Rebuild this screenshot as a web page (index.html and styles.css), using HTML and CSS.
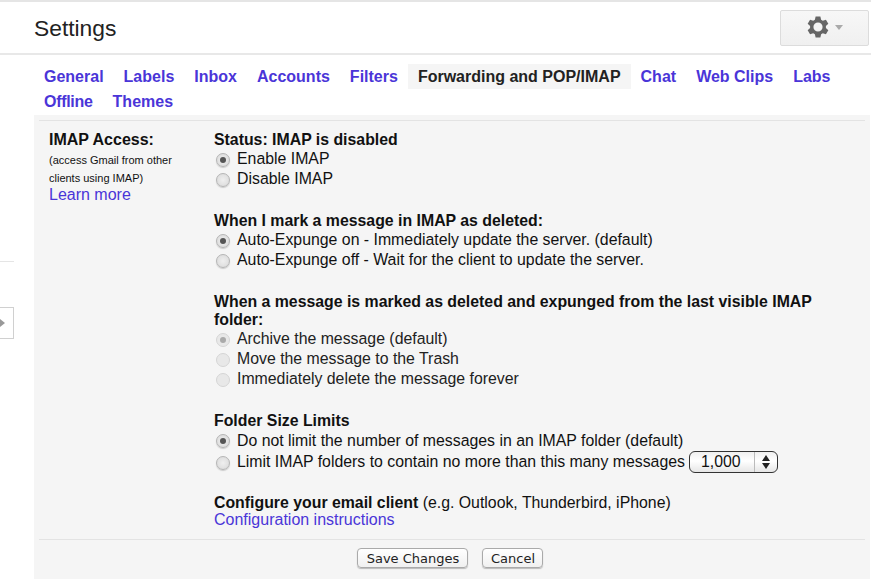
FILE: index.html
```html
<!DOCTYPE html>
<html lang="en">
<head>
    <meta charset="UTF-8">
    <title>Settings</title>
    <link rel="stylesheet" href="styles.css">
</head>
<body>
    <div class="header">
        <h1>Settings</h1>
        <button class="gear__btn">
            <svg width="22" height="22" viewBox="0 0 24 24"><path fill="#666" fill-rule="evenodd" d="M8.600 4L9.400 .5H14.600L15.400 4L17.230 5.060L20.660 4L23.260 8.500L20.630 10.940V13.060L23.260 15.500L20.660 20L17.230 18.940L15.400 20L14.600 23.500H9.400L8.600 20L6.770 18.940L3.340 20L.74 15.500L3.370 13.060V10.940L.74 8.500L3.340 4L6.770 5.060ZM12 7a5 5 0 1 0 0 10a5 5 0 0 0 0-10Z"/></svg>
            <span class="gear__arrow"></span>
        </button>
    </div>
    <div class="main">
        <div class="rail">
            <div class="rail__line"></div>
            <div class="rail__toggle"><span class="rail__arrow"></span></div>
        </div>
        <div class="content">
            <div class="tabs">
                <a>General</a>
                <a>Labels</a>
                <a>Inbox</a>
                <a>Accounts</a>
                <a>Filters</a>
                <a class="tab__active">Forwarding and POP/IMAP</a>
                <a>Chat</a>
                <a>Web Clips</a>
                <a>Labs</a>
                <a class="tab__tight">Offline</a>
                <a>Themes</a>
            </div>
            <div class="panel">
                <div class="panel__body">
                    <div class="side">
                        <b>IMAP Access:</b>
                        <p>(access Gmail from other<br>clients using IMAP)</p>
                        <a class="link">Learn more</a>
                    </div>
                    <div class="options">
                        <div class="group">
                            <b>Status: IMAP is disabled</b>
                            <label><span class="radio radio--on"></span>Enable IMAP</label>
                            <label><span class="radio"></span>Disable IMAP</label>
                        </div>
                        <div class="group">
                            <b>When I mark a message in IMAP as deleted:</b>
                            <label><span class="radio radio--on"></span>Auto-Expunge on - Immediately update the server. (default)</label>
                            <label><span class="radio"></span>Auto-Expunge off - Wait for the client to update the server.</label>
                        </div>
                        <div class="group">
                            <b>When a message is marked as deleted and expunged from the last visible IMAP folder:</b>
                            <label><span class="radio radio--on radio--off"></span>Archive the message (default)</label>
                            <label><span class="radio radio--off"></span>Move the message to the Trash</label>
                            <label><span class="radio radio--off"></span>Immediately delete the message forever</label>
                        </div>
                        <div class="group group--limits">
                            <b>Folder Size Limits</b>
                            <label><span class="radio radio--on"></span>Do not limit the number of messages in an IMAP folder (default)</label>
                            <label class="select__row"><span class="radio"></span>Limit IMAP folders to contain no more than this many messages
                                <span class="select"><span class="select__value">1,000</span><span class="select__arrows"><i class="up"></i><i class="down"></i></span></span>
                            </label>
                        </div>
                        <div class="group">
                            <div><b>Configure your email client</b> (e.g. Outlook, Thunderbird, iPhone)</div>
                            <a class="link">Configuration instructions</a>
                        </div>
                    </div>
                </div>
                <div class="actions">
                    <button class="btn btn--save">Save Changes</button>
                    <button class="btn">Cancel</button>
                </div>
            </div>
        </div>
    </div>
</body>
</html>
```

FILE: styles.css
```css
* {
    margin: 0px;
    box-sizing: border-box;
}

body {
    font-family: "Liberation Sans", Arial, sans-serif;
    font-size: 15.85px;
    line-height: 18px;
    color: #111;
    background-color: #fff;
    overflow: hidden;
}

.header {
    height: 55px;
    border-top: 2px solid #e5e5e5;
    border-bottom: 2px solid #e8e8e8;
    padding: 8px 2px 0px 34px;
    display: flex;
    justify-content: space-between;
    align-items: flex-start;
}
.header h1 {
    font-size: 22.8px;
    font-weight: normal;
    line-height: 36px;
    color: #222;
}
.gear__btn {
    width: 89px;
    height: 36px;
    background: linear-gradient(#f7f7f7, #f0f0f0);
    border: 1px solid #dcdcdc;
    border-radius: 2px;
    padding: 0px 0px 2px 0px;
    display: flex;
    justify-content: center;
    align-items: center;
    gap: 6px;
}
.gear__arrow {
    width: 0px;
    height: 0px;
    border: 4px solid transparent;
    border-top: 5px solid #aaa;
    border-bottom: 0px;
}

.main {
    display: flex;
}
.rail {
    width: 34px;
    flex-shrink: 0;
}
.rail__line {
    width: 14px;
    height: 1px;
    margin-top: 206px;
    background-color: #e5e5e5;
}
.rail__toggle {
    width: 14px;
    height: 32px;
    margin-top: 45px;
    border: 1px solid #d0d0d0;
    border-left: 0px;
    display: flex;
    justify-content: flex-end;
    align-items: center;
    padding-right: 8px;
}
.rail__arrow {
    width: 0px;
    height: 0px;
    border-left: 5px solid #999;
    border-top: 4px solid transparent;
    border-bottom: 4px solid transparent;
}

.content {
    flex: 1;
    min-width: 0;
}
.tabs {
    padding: 9px 10px 1px 0px;
    display: flex;
    flex-wrap: wrap;
    font-size: 16px;
    font-weight: bold;
    line-height: 25px;
    color: #4a35d8;
}
.tabs a {
    padding: 0px 10px;
}
.tabs .tab__active {
    background-color: #f5f5f5;
    color: #222;
}
.tabs .tab__tight {
    letter-spacing: -0.3px;
}

.panel {
    background-color: #f5f5f5;
    margin-right: 1px;
    padding: 5px 5px 0px 5px;
}
.panel__body {
    border-top: 1px solid #e3e3e3;
    border-bottom: 1px solid #e3e3e3;
    padding: 10px 5px 11px 10px;
    display: flex;
}
.side {
    width: 165px;
    flex-shrink: 0;
}
.side b {
    display: block;
    font-size: 16px;
}
.side p {
    margin-top: 2px;
    font-size: 11px;
    line-height: 18px;
}
.link {
    color: #4a35d8;
    display: block;
    font-size: 16px;
    line-height: 16px;
}
.options {
    flex: 1;
}
.group {
    margin-bottom: 23px;
}
.group--limits {
    margin-bottom: 21px;
}
.group:last-child {
    margin-bottom: 0px;
}
.group b {
    display: block;
}
.group div b {
    display: inline;
}
.group label {
    display: flex;
    align-items: center;
    height: 20px;
    white-space: nowrap;
}
.group--limits label {
    height: 21px;
}
.group--limits .select__row {
    height: 22px;
}
.radio {
    width: 14px;
    height: 14px;
    margin: 1px 7px 0px 2px;
    border-radius: 50%;
    border: 1px solid #b5b5b5;
    background: radial-gradient(#efefef, #d8d8d8);
    box-shadow: 0px 1px 1px #ccc;
    display: flex;
    justify-content: center;
    align-items: center;
    flex-shrink: 0;
}
.radio--on::after {
    content: "";
    width: 6px;
    height: 6px;
    border-radius: 50%;
    background-color: #555;
}
.radio--off {
    border-color: #d5d5d5;
    background: #e8e8e8;
    box-shadow: none;
}
.radio--off::after {
    background-color: #aaa;
}
.group label:has(.radio--off) {
    color: #222;
}
.select {
    width: 89px;
    height: 22px;
    margin-left: 4px;
    border: 1px solid #333;
    border-radius: 6px;
    background: linear-gradient(#efefef, #fff 45%, #e6e6e6);
    display: flex;
    align-items: center;
}
.select__value {
    flex: 1;
    padding-left: 11px;
}
.select__arrows {
    width: 23px;
    height: 100%;
    border-left: 1px solid #bbb;
    display: flex;
    flex-direction: column;
    justify-content: center;
    align-items: center;
    gap: 2px;
}
.select__arrows i {
    width: 0px;
    height: 0px;
    border-left: 4px solid transparent;
    border-right: 4px solid transparent;
}
.select__arrows .up {
    border-bottom: 6px solid #222;
}
.select__arrows .down {
    border-top: 6px solid #222;
}

.actions {
    height: 40px;
    padding: 8px 4px 0px 0px;
    display: flex;
    justify-content: center;
    gap: 14px;
}
.btn {
    height: 20px;
    width: 61px;
    padding: 2px 0px 0px 1px;
    font-family: "DejaVu Sans", sans-serif;
    font-size: 13px;
    line-height: 16px;
    color: #222;
    background: linear-gradient(#fff, #f0f0f0);
    border: 1px solid #aaa;
    border-radius: 4px;
    box-shadow: 0px 1px 1px #bbb;
}
.btn--save {
    width: 111px;
}
```
